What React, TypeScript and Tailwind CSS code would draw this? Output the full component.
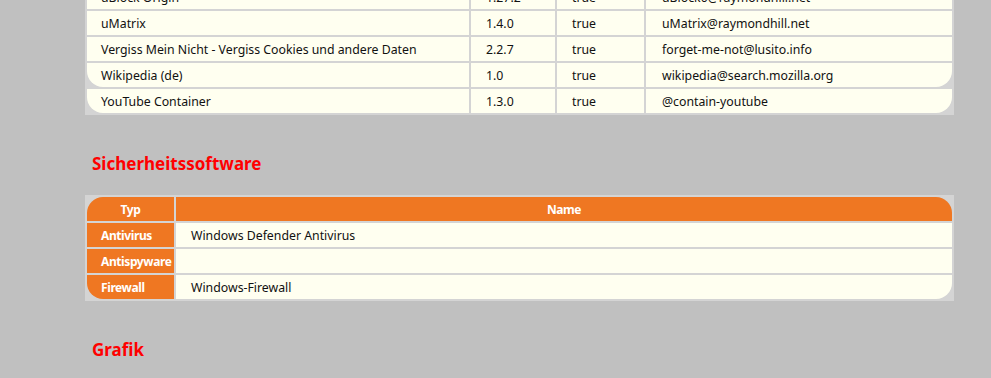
import React from "react";

const addons = [
  ["uBlock Origin", "1.27.2", "true", "uBlock0@raymondhill.net"],
  ["uMatrix", "1.4.0", "true", "uMatrix@raymondhill.net"],
  ["Vergiss Mein Nicht - Vergiss Cookies und andere Daten", "2.2.7", "true", "forget-me-not@lusito.info"],
  ["Wikipedia (de)", "1.0", "true", "wikipedia@search.mozilla.org"],
  ["YouTube Container", "1.3.0", "true", "@contain-youtube"],
];

const sec = [
  ["Antivirus", "Windows Defender Antivirus"],
  ["Antispyware", ""],
  ["Firewall", "Windows-Firewall"],
];

export default function App() {
  return (
    <div
      className="min-h-[378px] w-full bg-[#c0c0c0] overflow-hidden pl-[85px] text-[12.3px] text-[#111]"
      style={{ fontFamily: '"Noto Sans", "Open Sans", sans-serif' }}
    >
      <table className="mt-[-17px] w-[869px] border-separate border-spacing-[2px] bg-[#d4d4d4] table-fixed">
        <colgroup>
          <col className="w-[382px]" />
          <col className="w-[84px]" />
          <col className="w-[87px]" />
          <col className="w-[306px]" />
        </colgroup>
        <tbody>
          {addons.map((r, i) => {
            const round = i >= 3;
            return (
              <tr key={i} className="h-[24px]">
                <td className={`bg-[#fffff0] pl-[14px] p-0 pt-[1px] leading-[23px] whitespace-nowrap ${round ? "rounded-bl-[16px]" : ""}`}>{r[0]}</td>
                <td className="bg-[#fffff0] pl-[15px] p-0 pt-[1px] leading-[23px]">{r[1]}</td>
                <td className="bg-[#fffff0] pl-[15px] p-0 pt-[1px] leading-[23px]">{r[2]}</td>
                <td className={`bg-[#fffff0] pl-[16px] p-0 pt-[1px] leading-[23px] ${round ? "rounded-br-[16px]" : ""}`}>{r[3]}</td>
              </tr>
            );
          })}
        </tbody>
      </table>

      <h2 className="mt-[37px] pl-[7px] text-[17px] leading-[24px] font-bold text-[#ff0000]">Sicherheitssoftware</h2>

      <table className="mt-[19px] w-[869px] border-separate border-spacing-[2px] bg-[#d4d4d4] table-fixed">
        <colgroup>
          <col className="w-[87px]" />
          <col className="w-[776px]" />
        </colgroup>
        <thead>
          <tr className="h-[24px]">
            <th className="bg-[#ef7722] text-white text-[12px] tracking-[-0.4px] font-bold text-center p-0 pt-[1px] leading-[23px] rounded-tl-[16px]">Typ</th>
            <th className="bg-[#ef7722] text-white text-[12px] tracking-[-0.4px] font-bold text-center p-0 pt-[1px] leading-[23px] rounded-tr-[16px]">Name</th>
          </tr>
        </thead>
        <tbody>
          {sec.map((r, i) => {
            const last = i === sec.length - 1;
            return (
              <tr key={i} className="h-[24px]">
                <td className={`bg-[#ef7722] text-white text-[12px] tracking-[-0.4px] font-bold pl-[14px] p-0 pt-[1px] leading-[23px] whitespace-nowrap ${last ? "rounded-bl-[16px]" : ""}`}>{r[0]}</td>
                <td className={`bg-[#fffff0] pl-[15px] p-0 pt-[1px] leading-[23px] ${last ? "rounded-br-[16px]" : ""}`}>{r[1]}</td>
              </tr>
            );
          })}
        </tbody>
      </table>

      <h2 className="mt-[37px] pl-[7px] text-[17px] leading-[24px] font-bold text-[#ff0000]">Grafik</h2>
    </div>
  );
}
